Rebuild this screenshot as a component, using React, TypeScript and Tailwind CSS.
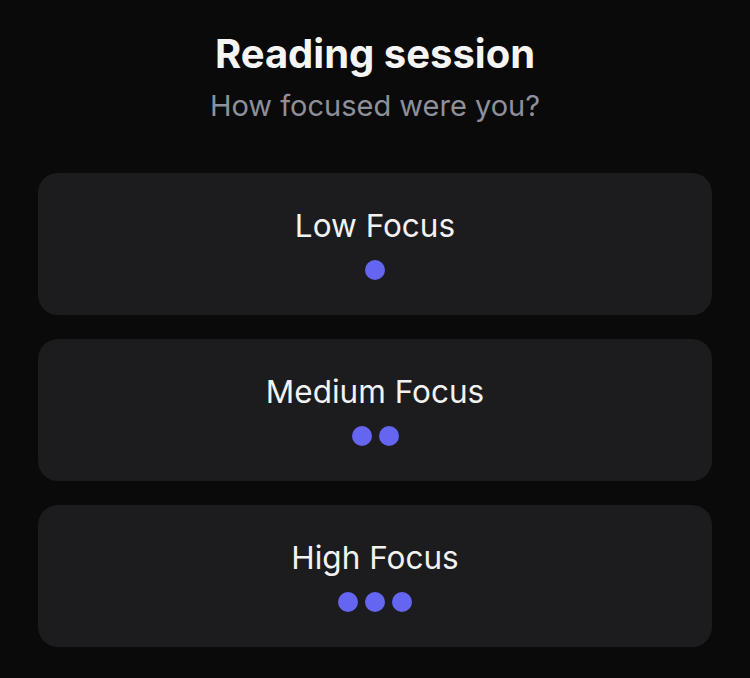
const levels = [
  { label: 'Low Focus', dots: 1 },
  { label: 'Medium Focus', dots: 2 },
  { label: 'High Focus', dots: 3 },
];

function FocusCard({ label, dots }: { label: string; dots: number }): JSX.Element {
  return (
    <button className="h-[142px] w-full rounded-[20px] bg-[#1c1c1e] flex flex-col items-center justify-center gap-[16px]">
      <span className="text-[31.5px] leading-[36px] text-[#f2f2f2]">{label}</span>
      <span className="flex gap-[7px]">
        {Array.from({ length: dots }).map((_, i) => (
          <span key={i} className="w-[20px] h-[20px] rounded-full bg-[#6466f1]" />
        ))}
      </span>
    </button>
  );
}

export default function App(): JSX.Element {
  return (
    <div
      className="min-h-[678px] bg-[#0a0a0a] px-[38px] pt-[30px]"
      style={{ fontFamily: 'Inter, "Noto Sans", sans-serif' }}
    >
      <div className="flex flex-col items-center">
        <h1 className="text-[40px] leading-[48px] font-bold text-[#f5f5f5]">Reading session</h1>
        <p className="text-[29px] leading-[36px] text-[#8e909b] mt-[10px]">How focused were you?</p>
      </div>
      <div className="mt-[49px] flex flex-col gap-[24px]">
        {levels.map((l) => (
          <FocusCard key={l.label} label={l.label} dots={l.dots} />
        ))}
      </div>
    </div>
  );
}
